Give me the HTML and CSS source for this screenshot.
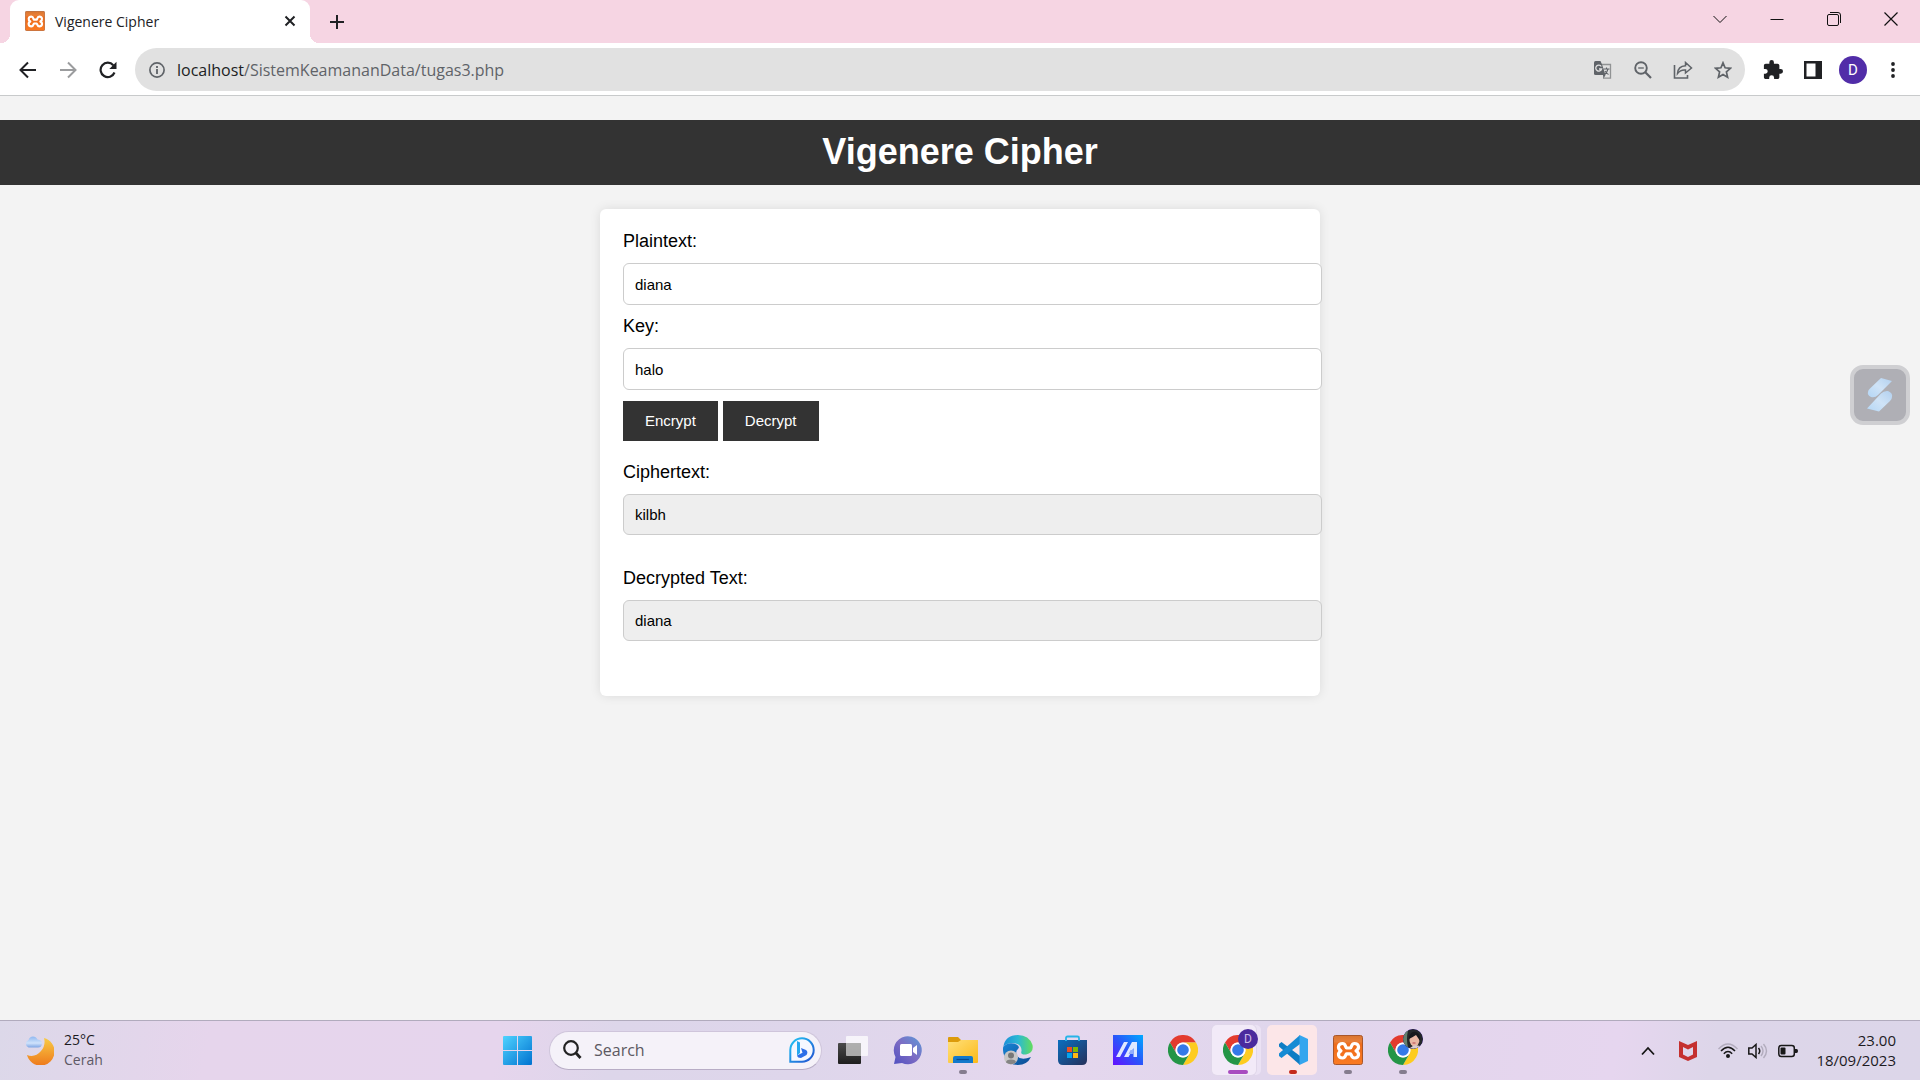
FILE: index.html
```html
<!DOCTYPE html>
<html lang="id">
<head>
<meta charset="utf-8">
<meta name="viewport" content="width=device-width, initial-scale=1">
<title>Vigenere Cipher</title>
<link rel="stylesheet" href="styles.css">
</head>
<body>
<svg class="defs" aria-hidden="true">
  <defs>
    <linearGradient id="g-orange" x1="0" y1="0" x2="0" y2="1"><stop offset="0" stop-color="#d9752f"/><stop offset=".2" stop-color="#e8803a"/><stop offset=".3" stop-color="#ee6c1b"/><stop offset="1" stop-color="#fa7a22"/></linearGradient>
    <linearGradient id="g-win" x1="0" y1="0" x2="1" y2="1"><stop offset="0" stop-color="#4fd3ff"/><stop offset="1" stop-color="#0072d0"/></linearGradient>
    <linearGradient id="g-moon" x1="0" y1="0" x2="0" y2="1"><stop offset="0" stop-color="#f8cb45"/><stop offset="1" stop-color="#ee7a1c"/></linearGradient>
    <linearGradient id="g-cloud" x1="0" y1="0" x2="0" y2="1"><stop offset="0" stop-color="#8fb8f0"/><stop offset=".6" stop-color="#cfe2fb"/><stop offset="1" stop-color="#7ea6e4"/></linearGradient>
    <linearGradient id="g-bing" x1="0" y1="0" x2="1" y2="1"><stop offset="0" stop-color="#22c7f5"/><stop offset="1" stop-color="#2250d0"/></linearGradient>
    <linearGradient id="g-chat" x1="1" y1="0" x2="0" y2="1"><stop offset="0" stop-color="#5b9bd8"/><stop offset=".5" stop-color="#7d6cc4"/><stop offset="1" stop-color="#5050c0"/></linearGradient>
    <linearGradient id="g-folder" x1="0" y1="0" x2="1" y2="1"><stop offset="0" stop-color="#ffe07a"/><stop offset="1" stop-color="#fcb917"/></linearGradient>
    <linearGradient id="g-edge" x1="0" y1="0" x2="1" y2="0"><stop offset="0" stop-color="#1b8ed8"/><stop offset=".5" stop-color="#2bb9d4"/><stop offset="1" stop-color="#62dd5c"/></linearGradient>
    <linearGradient id="g-edge2" x1="0" y1="0" x2="1" y2="1"><stop offset="0" stop-color="#1785d6"/><stop offset="1" stop-color="#0c4a92"/></linearGradient>
    <linearGradient id="g-store" x1="0" y1="0" x2="1" y2="1"><stop offset="0" stop-color="#0a6fc0"/><stop offset="1" stop-color="#26305a"/></linearGradient>
    <linearGradient id="g-asus" x1="0" y1="1" x2="1" y2="0"><stop offset="0" stop-color="#6410ff"/><stop offset=".5" stop-color="#2a55fa"/><stop offset="1" stop-color="#00aaff"/></linearGradient>
    <linearGradient id="g-task" x1="0" y1="0" x2="0" y2="1"><stop offset="0" stop-color="#4a4a4a"/><stop offset="1" stop-color="#1e1e1e"/></linearGradient>
    <linearGradient id="g-glass" x1="1" y1="0" x2="0" y2="1"><stop offset="0" stop-color="#b2d0ef"/><stop offset=".5" stop-color="#cfe3f7"/><stop offset="1" stop-color="#b4d6f5"/></linearGradient>
  </defs>
  <symbol id="xampp" viewBox="0 0 30 30">
    <rect x=".5" y=".5" width="29" height="29" rx="2" fill="url(#g-orange)" stroke="#a9572a"/>
    <path d="M9.500 8.500C5 8.500 4 13.500 8 15.800C4 18 5 23 9.500 23C13 23 12.500 18.800 13.500 18.800H17.500C18.500 18.800 18 23 21.500 23C26 23 27 18 23 15.800C27 13.500 26 8.500 21.500 8.500C18 8.500 18.500 13 17.500 13H13.500C12.500 13 13 8.500 9.500 8.500Z" fill="none" stroke="#fff" stroke-width="3.200" stroke-linejoin="round"/>
  </symbol>
  <symbol id="chrome" viewBox="0 0 30 30">
    <path fill="#e33b2e" d="M15 7.500H28A15 15 0 0 0 2 7.500L8.500 18.750A7.500 7.500 0 0 1 15 7.500Z"/>
    <path fill="#fdcc20" d="M28 7.500A15 15 0 0 1 15 30L21.500 18.750A7.500 7.500 0 0 0 15 7.500Z"/>
    <path fill="#249546" d="M15 30A15 15 0 0 1 2 7.500L8.500 18.750A7.500 7.500 0 0 0 21.500 18.750Z"/>
    <circle cx="15" cy="15" r="7.500" fill="#fff"/><circle cx="15" cy="15" r="5.800" fill="#3579e8"/>
  </symbol>
</svg>

<header class="browser">
  <div class="tab-strip">
    <div class="tab">
      <svg class="favicon" aria-hidden="true"><use href="#xampp"/></svg>
      <span class="tab-title">Vigenere Cipher</span>
      <button class="tab-close" aria-label="Close tab"><svg width="12" height="12" viewBox="0 0 12 12"><path d="M1.500 1.500L10.500 10.500M10.500 1.500L1.500 10.500" stroke="#202124" stroke-width="2"/></svg></button>
    </div>
    <button class="new-tab" aria-label="New tab"><svg width="16" height="16" viewBox="0 0 16 16"><path d="M8 1V15M1 8H15" stroke="#202124" stroke-width="2"/></svg></button>
    <div class="window-controls">
      <button aria-label="Search tabs"><svg width="14" height="14" viewBox="0 0 14 14"><path d="M.5 4L7 10.500L13.500 4" fill="none" stroke="#111"/></svg></button>
      <button aria-label="Minimize"><svg width="14" height="14" viewBox="0 0 14 14"><path d="M.5 7.500H13.500" stroke="#111"/></svg></button>
      <button aria-label="Restore"><svg width="14" height="14" viewBox="0 0 14 14"><rect x=".5" y="2.500" width="11" height="11" rx="1.500" fill="none" stroke="#111"/><path d="M3 .5H11Q13.500 .5 13.500 3V11" fill="none" stroke="#111"/></svg></button>
      <button aria-label="Close"><svg width="14" height="14" viewBox="0 0 14 14"><path d="M.5 .5L13.500 13.500M13.500 .5L.5 13.500" stroke="#111" stroke-width="1.200"/></svg></button>
    </div>
  </div>
  <div class="toolbar">
    <div class="nav-buttons">
      <button aria-label="Back"><svg width="18" height="18" viewBox="0 0 18 18"><path d="M17 9H2M9 1.500L1.500 9L9 16.500" fill="none" stroke="#202124" stroke-width="2"/></svg></button>
      <button aria-label="Forward"><svg width="18" height="18" viewBox="0 0 18 18"><path d="M1 9H16M9 1.500L16.500 9L9 16.500" fill="none" stroke="#9b9c9e" stroke-width="2"/></svg></button>
      <button aria-label="Reload"><svg width="18" height="18" viewBox="0 0 18 18"><path d="M15.500 11.500A7.200 7.200 0 1 1 14.300 4.200" fill="none" stroke="#202124" stroke-width="2.200"/><path d="M17.500 .8V8H10.300Z" fill="#202124"/></svg></button>
    </div>
    <div class="omnibox">
      <svg class="site-info" width="16" height="16" viewBox="0 0 16 16" aria-hidden="true"><circle cx="8" cy="8" r="7.100" fill="none" stroke="#5f6368" stroke-width="1.700"/><path d="M8 7V12M8 4V6" stroke="#5f6368" stroke-width="1.800"/></svg>
      <div class="url" role="textbox" aria-label="Address" contenteditable="true" spellcheck="false"><span class="host">localhost</span>/SistemKeamananData/tugas3.php</div>
      <button aria-label="Translate"><svg width="18" height="18" viewBox="0 0 18 18"><path d="M7 3.500H16.500V17.200H9" fill="none" stroke="#919394" stroke-width="1.300"/><path d="M0 1.500Q0 0 1.500 0H6.500L8.200 4L11.500 14H1.500Q0 14 0 12.500Z" fill="#5f6368"/><path d="M7.300 5.500A3 3 0 1 0 7.600 8H5" fill="none" stroke="#e1e1e1" stroke-width="1.300"/><path d="M9.500 8H15.500M12.500 6.500V8M14 8Q13 12 10.500 13.500M11 10Q12.500 12.500 14.500 13.500" fill="none" stroke="#5f6368" stroke-width="1.100"/><path d="M9 14H11.500L9.500 17.500Z" fill="#5f6368"/></svg></button>
      <button aria-label="Zoom out"><svg width="18" height="18" viewBox="0 0 18 18"><circle cx="7" cy="7" r="5.800" fill="none" stroke="#5f6368" stroke-width="1.900"/><path d="M11.300 11.300L17 17" stroke="#5f6368" stroke-width="2.200"/><path d="M4.200 7H9.800" stroke="#5f6368" stroke-width="1.300"/></svg></button>
      <button aria-label="Share"><svg width="20" height="18" viewBox="0 0 20 18"><path d="M1.500 4V17H14.500V14" fill="none" stroke="#5f6368" stroke-width="1.600"/><path d="M4.500 12.500Q5 5 12.500 4.700V1.500L18.500 7L12.500 12V9Q7.500 8.500 4.500 12.500Z" fill="none" stroke="#5f6368" stroke-width="1.500"/></svg></button>
      <button aria-label="Bookmark"><svg width="18" height="18" viewBox="0 0 18 18"><path d="M9 1.800L11.100 6.800L16.500 7.300L12.400 10.900L13.600 16.200L9 13.400L4.400 16.200L5.600 10.900L1.500 7.300L6.900 6.800Z" fill="none" stroke="#5f6368" stroke-width="1.700"/></svg></button>
    </div>
    <div class="actions">
      <button aria-label="Extensions"><svg width="20" height="20" viewBox="0 0 22 22"><path d="M20.500 11H19V7C19 5.900 18.100 5 17 5H13V3.500A2.500 2.500 0 0 0 8 3.500V5H4C2.900 5 2 5.900 2 7V10.800H3.500A2.700 2.700 0 0 1 3.500 16.200H2V20C2 21.100 2.900 22 4 22H7.800V20.500A2.700 2.700 0 0 1 13.200 20.500V22H17C18.100 22 19 21.100 19 20V16H20.500A2.500 2.500 0 0 0 20.500 11Z" fill="#202124" transform="translate(-1 -1)"/></svg></button>
      <button aria-label="Side panel"><svg width="18" height="18" viewBox="0 0 18 18"><path d="M0 0H18V18H0ZM2.500 2.500V15.500H11.500V2.500Z" fill="#202124" fill-rule="evenodd"/></svg></button>
      <button aria-label="Profile"><span class="avatar">D</span></button>
      <button aria-label="Menu"><svg width="4" height="16" viewBox="0 0 4 16"><circle cx="2" cy="2" r="1.900" fill="#202124"/><circle cx="2" cy="8" r="1.900" fill="#202124"/><circle cx="2" cy="14" r="1.900" fill="#202124"/></svg></button>
    </div>
  </div>
</header>

<main class="page">
  <h1 class="banner">Vigenere Cipher</h1>
  <form class="card">
    <label for="plaintext">Plaintext:</label>
    <input class="field" type="text" id="plaintext" value="diana">
    <label for="key">Key:</label>
    <input class="field" type="text" id="key" value="halo">
    <div class="buttons">
      <button class="submit" type="button">Encrypt</button>
      <button class="submit" type="button">Decrypt</button>
    </div>
    <div class="result">
      <label for="cipher">Ciphertext:</label>
      <input class="field output" type="text" id="cipher" value="kilbh" readonly>
    </div>
    <div class="result">
      <label for="decrypted">Decrypted Text:</label>
      <input class="field output" type="text" id="decrypted" value="diana" readonly>
    </div>
  </form>
  <button class="floating" aria-label="Assistant"><svg width="26" height="34" viewBox="0 0 26 34"><path d="M14 0L25 3L11 17Q8 20 4 19Q0 17 1 14Q1 12 3 10.500Z" fill="url(#g-glass)"/><path d="M12 33.500L0 30.500L14 15.500Q17 12.500 21 13Q26 15 25 19Q25 21 23 23Z" fill="url(#g-glass)"/></svg></button>
</main>

<footer class="taskbar">
  <div class="weather">
    <svg width="30" height="30" viewBox="0 0 30 30" aria-hidden="true"><path d="M20 3A14 14 0 1 1 3 20Q11 23 17 16Q22 10 20 3Z" fill="url(#g-moon)"/><path d="M4.500 12.500A4 4 0 0 1 4.500 5Q5.500 1.500 9 1.500Q12 1.500 13.500 4.500Q18.500 5 18 9Q17.500 12.500 14 12.500Z" fill="url(#g-cloud)"/></svg>
    <div><div>25°C</div><div class="muted">Cerah</div></div>
  </div>
  <div class="dock">
    <button class="app" aria-label="Start"><svg width="29" height="29" viewBox="0 0 29 29"><path d="M1 0H14V14H0V1Q0 0 1 0ZM15 0H28Q29 0 29 1V14H15ZM0 15H14V29H1Q0 29 0 28ZM15 15H29V28Q29 29 28 29H15Z" fill="url(#g-win)"/></svg></button>
    <label class="search">
      <svg width="19" height="20" viewBox="0 0 19 20" aria-hidden="true"><circle cx="8" cy="8" r="6.800" fill="none" stroke="#222" stroke-width="2.200"/><path d="M12.500 12.500L17.500 18" stroke="#222" stroke-width="2.800"/></svg>
      <input type="text" placeholder="Search" aria-label="Search">
      <svg width="26" height="26" viewBox="0 0 26 26" aria-hidden="true"><path d="M1.300 24.700V13A11.700 11.700 0 1 1 13 24.700Z" fill="#f5f8ff" stroke="url(#g-bing)" stroke-width="2"/><path d="M8 4L11 5.500V16L8 18.500Z" fill="#25a8f0"/><path d="M8 18.500L13.500 15.800L12 11L17 13Q19.500 15 17.500 18L12 21Q8.500 21 8 18.500Z" fill="#2c6fe8"/></svg>
    </label>
    <button class="app" aria-label="Task view"><svg width="30" height="30" viewBox="0 0 30 30"><rect y="8" width="23" height="21" rx="1" fill="url(#g-task)"/><rect x="8" y="1" width="22" height="20" rx="1" fill="#fff" fill-opacity=".72"/><path d="M8 8H23V21H8Z" fill="#777" fill-opacity=".35"/></svg></button>
    <button class="app" aria-label="Chat"><svg width="30" height="30" viewBox="0 0 30 30"><path d="M1 29L2.500 22A14 14 0 1 1 9 28Z" fill="url(#g-chat)"/><rect x="7" y="9" width="12" height="12" rx="1.500" fill="#fff"/><path d="M20 13L24 10V20L20 17Z" fill="#fff"/></svg></button>
    <button class="app open" aria-label="File Explorer"><svg width="30" height="30" viewBox="0 0 30 30"><path d="M0 3Q0 2 1 2H10L13 5H29Q30 5 30 6V12H0Z" fill="#dc9b0b"/><path d="M0 7H10L13 5H30V27Q30 28 29 28H1Q0 28 0 27Z" fill="url(#g-folder)"/><path d="M5 28V23Q5 21 7 21H23Q25 21 25 23V28Z" fill="#1379cb"/><path d="M8.500 24.500H21" stroke="#084b91" stroke-width="1.200"/></svg></button>
    <button class="app" aria-label="Edge"><svg width="30" height="30" viewBox="0 0 30 30"><path d="M.3 12Q2 0 15 0Q26 0 29.500 10Q31 18 23 19.500Q17 20 18.500 16Q19 9 10 8Q3 8 .3 12Z" fill="url(#g-edge)"/><path d="M.2 12Q4 7 11 8.500Q18 11 15 14Q12 16 14 21Q18 26 28 22Q24 30 15 30Q5 30 1 20Q-.5 16 .2 12Z" fill="url(#g-edge2)"/><circle cx="8" cy="22.500" r="7" fill="#c8c6c6"/><circle cx="8" cy="20.500" r="3" fill="#777"/><path d="M3 27.500Q3 24.500 8 24.500T13 27.500Q8 31 3 27.500Z" fill="#858585"/></svg></button>
    <button class="app" aria-label="Microsoft Store"><svg width="30" height="30" viewBox="0 0 30 30"><path d="M0 5H29V25Q29 30 24 30H5Q0 30 0 25Z" fill="url(#g-store)"/><path d="M8 6V3Q8 1.500 9.500 1.500H19.500Q21 1.500 21 3V6" fill="none" stroke="#27b4e8" stroke-width="1.800"/><path fill="#ee5022" d="M9 12H14V17H9Z"/><path fill="#80b900" d="M15 12H20V17H15Z"/><path fill="#05a4ee" d="M9 18H14V23H9Z"/><path fill="#fdb813" d="M15 18H20V23H15Z"/></svg></button>
    <button class="app" aria-label="MyASUS"><svg width="30" height="30" viewBox="0 0 30 30"><path d="M0 0H30V30H0Z" fill="url(#g-asus)"/><path d="M3 22L11 7H15L7 22ZM11 22L19 7H24V22H20.500V13L15.500 22Z" fill="#dfe8ff"/><path d="M15.500 19L17.500 15H20.500V19Z" fill="#93aefc"/></svg></button>
    <button class="app" aria-label="Chrome"><svg width="30" height="30"><use href="#chrome"/></svg></button>
    <button class="app active" aria-label="Chrome, profile D"><svg width="30" height="30"><use href="#chrome"/></svg><span class="badge">D</span></button>
    <button class="app alert" aria-label="Visual Studio Code"><svg width="30" height="30" viewBox="0 0 30 30"><path d="M1 9L3.500 7L22 21V30L1 11.500Z" fill="#0e7dc4"/><path d="M1 21L3.500 23L22 9V0L1 18.500Z" fill="#168bd4"/><path d="M21.500 0L30 4V26L21.500 30V9Z" fill="#35a6ee"/></svg></button>
    <button class="app open" aria-label="XAMPP"><svg width="30" height="30"><use href="#xampp"/></svg></button>
    <button class="app open" aria-label="Chrome, personal profile"><svg width="30" height="30"><use href="#chrome"/></svg><svg class="badge" viewBox="0 0 20 20"><circle cx="10" cy="10" r="10" fill="#24282a"/><path d="M0 10A10 10 0 0 1 5 1.500Q3 10 5 18.500A10 10 0 0 1 0 10Z" fill="#64806f"/><ellipse cx="11.500" cy="11" rx="5" ry="6.500" fill="#e9b7a3"/><path d="M6 8Q8 2 13 3Q18 5 17 12Q14.500 8 13 6Q10 8 6 10Z" fill="#17191c"/><path d="M7 19Q11 15 17 17Q13 21 7 19Z" fill="#d7cbd0"/><path d="M9.500 14H12.500" stroke="#b84650"/></svg></button>
  </div>
  <div class="tray">
    <svg width="14" height="10" viewBox="0 0 14 10" aria-hidden="true"><path d="M1 8.500L7 2L13 8.500" fill="none" stroke="#151515" stroke-width="1.800"/></svg>
    <svg class="shield" width="18" height="20" viewBox="0 0 18 20" aria-hidden="true"><path d="M0 0L9 4L18 0V16L9 20L0 16ZM4 6V13.500L9 16L14 13.500V6L9 8.500Z" fill="#c5302f" fill-rule="evenodd"/></svg>
    <div class="status">
      <svg width="20" height="16" viewBox="0 0 20 16" aria-hidden="true"><path d="M.5 6Q10-4 19.500 6" fill="none" stroke="#b2acbd" stroke-width="1.400"/><path d="M3 8Q10 .5 17 8M5.800 10.700Q10 6.500 14.200 10.700" fill="none" stroke="#181818" stroke-width="1.500"/><circle cx="10" cy="13" r="2" fill="#181818"/></svg>
      <svg width="20" height="16" viewBox="0 0 20 16" aria-hidden="true"><path d="M.8 5H4L8 1.500V14.500L4 11H.8Z" fill="none" stroke="#181818" stroke-width="1.500"/><path d="M10.500 5Q13 8 10.500 11" fill="none" stroke="#181818" stroke-width="1.500"/><path d="M13 3Q17 8 13 13M15.500 1Q21.500 8 15.500 15" fill="none" stroke="#b2acbd" stroke-width="1.400"/></svg>
      <svg width="20" height="14" viewBox="0 0 20 14" aria-hidden="true"><rect x=".8" y="1.500" width="15.500" height="11" rx="2.500" fill="none" stroke="#181818" stroke-width="1.500"/><rect x="2.500" y="3.500" width="5" height="7" rx="1" fill="#181818"/><path d="M17 5H18.500Q20 5 20 7T18.500 9H17Z" fill="#181818"/></svg>
    </div>
    <div class="clock"><div>23.00</div><div>18/09/2023</div></div>
  </div>
</footer>
</body>
</html>
```
FILE: styles.css
```css
* { box-sizing: border-box; }

body {
  margin: 0;
  min-height: 100vh;
  display: flex;
  flex-direction: column;
  background: #f3f3f3;
  font-family: "Open Sans", "Noto Sans", sans-serif;
  color: #202124;
}

button {
  border: 0;
  padding: 0;
  background: none;
  font: inherit;
  color: inherit;
}

svg { display: block; flex: none; }

.defs { position: absolute; width: 0; height: 0; }

/* Browser window */
.tab-strip {
  display: flex;
  height: 43px;
  padding: 0 1px 0 10px;
  background: #f6d5e3;
}

.tab {
  position: relative;
  display: flex;
  align-items: center;
  width: 300px;
  padding: 0 14px 1px 15px;
  background: #fff;
  border-radius: 9px 9px 0 0;
}

.tab::before,
.tab::after {
  content: "";
  position: absolute;
  bottom: 0;
  width: 9px;
  height: 9px;
}

.tab::before { right: 100%; background: radial-gradient(circle at 0 0, #f6d5e3 9px, #fff 9px); }
.tab::after { left: 100%; background: radial-gradient(circle at 100% 0, #f6d5e3 9px, #fff 9px); }

.favicon { width: 20px; height: 20px; }

.tab-title {
  flex: 1;
  margin-left: 10px;
  font-size: 14px;
}

.new-tab { width: 32px; margin-left: 11px; display: grid; place-items: center; }

.window-controls { display: flex; margin-left: auto; height: 37px; }
.window-controls button { width: 57px; display: grid; place-items: center; }

.toolbar {
  display: flex;
  align-items: center;
  height: 53px;
  padding: 1px 7px 0 8px;
  background: #fff;
  border-bottom: 1px solid #c8cacb;
}

.nav-buttons, .actions { display: flex; }
.nav-buttons button, .actions button, .omnibox button { width: 40px; height: 40px; display: grid; place-items: center; }

.omnibox {
  flex: 1;
  display: flex;
  align-items: center;
  height: 43px;
  margin: 0 8px 0 7px;
  padding: 0 2px 0 14px;
  border-radius: 22px;
  background: #e1e1e1;
}

.url {
  flex: 1;
  margin-left: 12px;
  font-size: 16px;
  line-height: 24px;
  color: #5f6368;
  outline: 0;
}

.host { color: #202124; }

.avatar {
  display: grid;
  place-items: center;
  width: 28px;
  height: 28px;
  border-radius: 50%;
  background: #512da8;
  color: #fff;
  font: 15px Roboto, sans-serif;
}

/* Cipher page */
.page {
  position: relative;
  flex: 1;
  padding: 24px 0;
  font-family: Arial, "Liberation Sans", sans-serif;
  color: #000;
}

.banner {
  margin: 0 0 24px;
  padding: 10px 11px 12px;
  background: #333;
  color: #fff;
  font-size: 36px;
  line-height: 43px;
  text-align: center;
}

.card {
  display: flex;
  flex-direction: column;
  gap: 11px;
  max-width: 720px;
  margin: 0 auto;
  padding: 22px 22px 22px 23px;
  border-radius: 6px;
  background: #fff;
  box-shadow: 0 0 11px rgba(0, 0, 0, .1);
  font-size: 18px;
  line-height: 21px;
}

.field {
  box-sizing: content-box;
  width: 100%;
  height: 18px;
  padding: 11px;
  border: 1px solid #ccc;
  border-radius: 6px;
  background: #fff;
  color: #000;
  font: 15px Arial, "Liberation Sans", sans-serif;
}

.output { height: 17px; background: #eee; }

.buttons { display: flex; gap: 5px; }

.submit {
  padding: 11px 22px;
  background: #333;
  color: #fff;
  font-size: 15px;
  line-height: 18px;
}

.result {
  display: flex;
  flex-direction: column;
  gap: 11px;
  margin-top: 10px;
  padding-bottom: 12px;
}

.result:last-child { padding-bottom: 33px; }

.floating {
  position: absolute;
  top: 269px;
  right: 10px;
  display: grid;
  place-items: center;
  width: 60px;
  height: 60px;
  border: 4px solid #cfcfd2;
  border-radius: 13px;
  background: #afafb5;
}

/* Taskbar */
.taskbar {
  display: grid;
  grid-template-columns: 1fr auto 1fr;
  height: 60px;
  border-top: 1px solid #b1abbd;
  background: linear-gradient(100deg, #dcd8e9, #e6d5ec 11%, #e6d5ed 26%, #ddd6ea 32%, #ded6eb 42%, #e5d7ee 55%, #e0d6ec 66%, #e4d6ed 75%, #e6d6ef 84%, #ddd6e9 89%, #dcd6e9);
}

.weather {
  display: flex;
  align-items: center;
  gap: 10px;
  padding: 0 0 2px 24px;
  font-size: 14px;
  line-height: 20px;
  color: #1c1b1f;
}

.muted { color: #5d5965; }

.dock { display: flex; align-items: center; padding-bottom: 1px; }

.app {
  position: relative;
  display: grid;
  place-items: center;
  width: 55px;
  height: 58px;
}

.app > svg, .app > .badge { z-index: 1; }

.open::after, .active::after, .alert::after {
  content: "";
  position: absolute;
  bottom: 5px;
  width: 8px;
  height: 4px;
  border-radius: 2px;
  background: #857d8e;
}

.active::after { width: 20px; background: #a84cc0; }
.alert::after { background: #c42b1c; }

.active::before, .alert::before {
  content: "";
  position: absolute;
  inset: 4px 3px 4px 2px;
  border-radius: 5px;
}

.active::before {
  right: 9px;
  background: #f2eaf8;
  box-shadow: 0 0 0 1px #e0d7ea, 5px 0 0 #ebe2f4;
}

.alert::before { background: #fce6e8; }

.badge {
  position: absolute;
  top: 8px;
  right: 7px;
  display: grid;
  place-items: center;
  width: 20px;
  height: 20px;
  border-radius: 50%;
  background: #4a2b9d;
  color: #c9bde8;
  font: 12px Roboto, sans-serif;
}

.search {
  display: flex;
  align-items: center;
  width: 273px;
  height: 39px;
  margin: 0 3px 0 4px;
  padding: 0 6px 0 13px;
  border: 1px solid #cfc5db;
  border-bottom-color: #b8adc6;
  border-radius: 20px;
  background: #f5f2f9;
}

.search input {
  flex: 1;
  min-width: 0;
  margin: 0 0 0 12px;
  padding: 0;
  border: 0;
  outline: 0;
  background: none;
  font: 16px "Open Sans", "Noto Sans", sans-serif;
}

.search input::placeholder { color: #5c5962; }

.tray {
  display: flex;
  align-items: center;
  justify-content: flex-end;
  padding-right: 24px;
  color: #1c1b1f;
}

.shield { margin: 0 21px 0 24px; }
.status { display: flex; align-items: center; gap: 10px; }

.clock {
  width: 98px;
  padding-bottom: 2px;
  font-size: 15px;
  line-height: 20px;
  text-align: right;
}
```
